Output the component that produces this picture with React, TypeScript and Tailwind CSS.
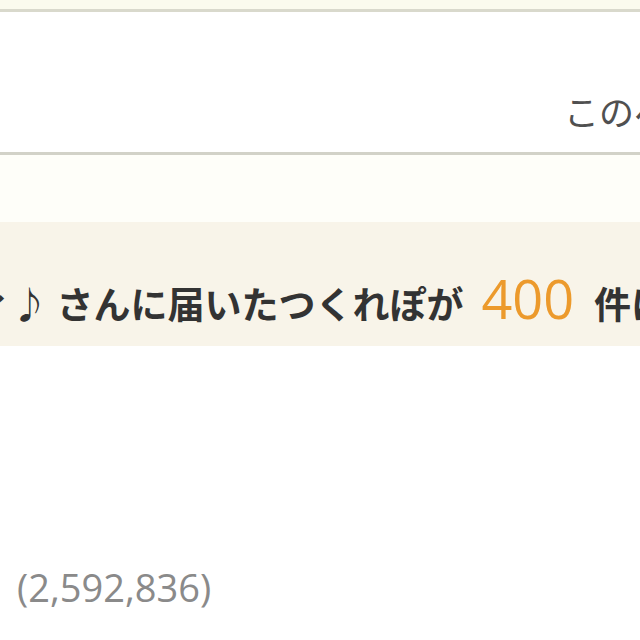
export default function App() {
  return (
    <div
      className="w-[640px] h-[640px] overflow-hidden bg-white flex flex-col"
      style={{ fontFamily: '"Noto Sans CJK JP", "Open Sans", sans-serif' }}
    >
      <div className="h-[9px] bg-[#fbfbee]" />
      <div className="h-[3px] bg-[#d9d9cc]" />
      <div className="h-[140px] flex items-end pb-[24px] pl-[564px] whitespace-nowrap">
        <span className="text-[35px] leading-none text-[#505050]">このページ</span>
      </div>
      <div className="h-[3px] bg-[#d2d2c8]" />
      <div className="h-[67px] bg-[#fefef9]" />
      <div className="h-[124px] bg-[#f8f4e9] flex items-center whitespace-nowrap">
        <div className="ml-[-26px] flex items-baseline font-bold text-[37px] text-[#333333] pt-[28px]">
          <span>ィ♪ さんに届いたつくれぽが</span>
          <span
            className="ml-[18px] mr-[20px] font-normal text-[54px] text-[#ec9a2c]"
            style={{ fontFamily: '"Open Sans", sans-serif' }}
          >
            400
          </span>
          <span>件に</span>
        </div>
      </div>
      <div className="pt-[222px] whitespace-nowrap">
        <div
          className="ml-[-34px] flex items-baseline text-[38px] leading-none text-[#8a8a8a]"
          style={{ fontFamily: '"Open Sans", sans-serif' }}
        >
          <span className="mr-[12px]">ト</span>
          <span>(2,592,836)</span>
        </div>
      </div>
    </div>
  );
}
